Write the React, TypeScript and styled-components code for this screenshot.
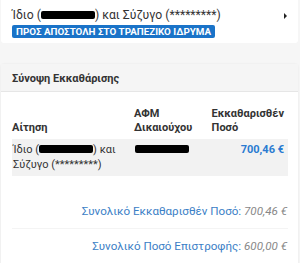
import React from "react";
import styled, { createGlobalStyle } from "styled-components";

const GlobalStyle = createGlobalStyle`
  body {
    margin: 0;
    background: #f6f6f6;
    font-family: Roboto, "Noto Sans", sans-serif;
    color: #333;
  }
`;

interface Row {
  applicant: string;
  spouse: string;
  amount: string;
}

const rows: Row[] = [
  { applicant: "Ίδιο (", spouse: "Σύζυγο (*********)", amount: "700,46 €" },
];

const totals = [
  { label: "Συνολικό Εκκαθαρισθέν Ποσό:", value: "700,46 €" },
  { label: "Συνολικό Ποσό Επιστροφής:", value: "600,00 €" },
];

export default function App() {
  return (
    <>
      <GlobalStyle />
      <Page>
        <RequestCard>
          <RequestInfo>
            <RequestTitle>
              Ίδιο (<Redacted $w={54} />) και Σύζυγο (*********)
            </RequestTitle>
            <Badge>ΠΡΟΣ ΑΠΟΣΤΟΛΗ ΣΤΟ ΤΡΑΠΕΖΙΚΟ ΙΔΡΥΜΑ</Badge>
          </RequestInfo>
          <Arrow />
        </RequestCard>

        <SummaryCard>
          <SummaryHeader>Σύνοψη Εκκαθάρισης</SummaryHeader>
          <SummaryBody>
            <Table>
              <thead>
                <tr>
                  <Th $w={119}>Αίτηση</Th>
                  <Th $w={74}>ΑΦΜ Δικαιούχου</Th>
                  <Th>Εκκαθαρισθέν Ποσό</Th>
                </tr>
              </thead>
              <tbody>
                {rows.map((r, i) => (
                  <tr key={i}>
                    <Td>
                      {r.applicant}
                      <Redacted $w={54} />) και {r.spouse}
                    </Td>
                    <Td>
                      <Redacted $w={54} />
                    </Td>
                    <AmountTd>{r.amount}</AmountTd>
                  </tr>
                ))}
              </tbody>
            </Table>

            <Totals>
              {totals.map((t) => (
                <TotalRow key={t.label}>
                  <TotalLabel>{t.label}</TotalLabel> <TotalValue>{t.value}</TotalValue>
                </TotalRow>
              ))}
            </Totals>
          </SummaryBody>
        </SummaryCard>
      </Page>
    </>
  );
}

const Page = styled.div`
  padding: 0 2px 0 1px;
`;

const RequestCard = styled.div`
  display: flex;
  align-items: flex-start;
  justify-content: space-between;
  background: #fff;
  height: 43px;
  box-sizing: border-box;
  padding: 8px 11px 0 11px;
  border-radius: 0 0 3px 3px;
`;

const RequestInfo = styled.div`
  display: flex;
  flex-direction: column;
  align-items: flex-start;
  gap: 3px;
`;

const RequestTitle = styled.div`
  font-size: 12.2px;
  line-height: 14px;
  color: #333;
`;

const Redacted = styled.span<{ $w: number }>`
  display: inline-block;
  width: ${({ $w }) => $w}px;
  height: 8px;
  background: #000;
  border-radius: 2px;
  vertical-align: 0px;
`;

const Badge = styled.span`
  background: #1a73c8;
  color: #fff;
  font-size: 9.8px;
  font-weight: 700;
  line-height: 13px;
  padding: 0 4px;
  border-radius: 2px;
  white-space: nowrap;
`;

const Arrow = styled.span`
  width: 0;
  height: 0;
  margin-top: 5px;
  margin-right: 0px;
  border-top: 3px solid transparent;
  border-bottom: 3px solid transparent;
  border-left: 3px solid #222;
`;

const SummaryCard = styled.div`
  margin-top: 21px;
  background: #fff;
  border-radius: 3px 3px 0 0;
  box-shadow: 0 0 2px rgba(0, 0, 0, 0.08);
`;

const SummaryHeader = styled.div`
  background: #f5f5f5;
  border-bottom: 1px solid #e6e6e6;
  height: 27px;
  line-height: 29px;
  padding: 0 11px;
  font-size: 11px;
  font-weight: 700;
  color: #333;
`;

const SummaryBody = styled.div`
  padding: 15px 10px 0 11px;
`;

const Table = styled.table`
  width: 100%;
  border-collapse: collapse;
  font-size: 11px;
  border-bottom: 1px solid #f2f2f2;

  tbody tr {
    background: #f2f2f2;
  }

  tbody tr td {
    padding-top: 3px;
    padding-bottom: 4px;
  }

  tbody tr:last-child td {
    border-bottom: 18px solid #fff;
  }
`;

const Th = styled.th<{ $w?: number }>`
  width: ${({ $w }) => ($w ? `${$w}px` : "auto")};
  text-align: left;
  vertical-align: bottom;
  font-weight: 700;
  line-height: 14px;
  padding: 0 4px 4px 0;
  color: #333;
`;

const Td = styled.td`
  vertical-align: top;
  line-height: 15px;
  padding-right: 4px;
  color: #333;
`;

const AmountTd = styled(Td)`
  text-align: right;
  font-weight: 700;
  color: #2a7bd1;
`;

const Totals = styled.div`
  display: flex;
  flex-direction: column;
`;

const TotalRow = styled.div`
  text-align: right;
  font-size: 11.6px;
  height: 34px;
  line-height: 34px;
  padding-right: 1px;
  border-bottom: 1px solid #f4f4f4;

  &:last-child {
    border-bottom: 1px solid #f9e6dc;
  }
`;

const TotalLabel = styled.span`
  color: #3b80c6;
`;

const TotalValue = styled.span`
  color: #888;
  font-style: italic;
`;
